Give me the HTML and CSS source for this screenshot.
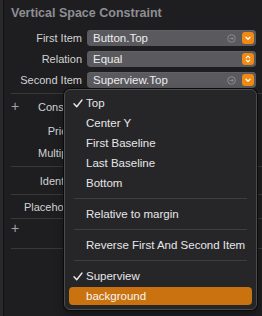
FILE: index.html
```html
<!DOCTYPE html>
<html>
<head>
<meta charset="utf-8">
<link rel="stylesheet" href="styles.css">
</head>
<body>
<div class="app">
  <div class="edge"></div>
  <div class="panel">
    <div class="title">Vertical Space Constraint</div>
    <div class="rows">
      <div class="row">
        <div class="label">First Item</div>
        <div class="field">
          <span class="value">Button.Top</span>
          <svg class="go" width="9" height="9" viewBox="0 0 9 9"><circle cx="4.5" cy="4.5" r="3.8" fill="none" stroke="#8a8a8e" stroke-width="1"/><path d="M2.6 4.5h3.6M4.6 2.9l1.6 1.6-1.6 1.6" fill="none" stroke="#8a8a8e" stroke-width="0.9"/></svg>
          <span class="obtn"><svg width="12" height="12" viewBox="0 0 12 12"><path d="M4 5.2l2 2 2-2" fill="none" stroke="#fff" stroke-width="1.3" stroke-linecap="round" stroke-linejoin="round"/></svg></span>
        </div>
      </div>
      <div class="row">
        <div class="label">Relation</div>
        <div class="field">
          <span class="value">Equal</span>
          <span class="obtn"><svg width="12" height="12" viewBox="0 0 12 12"><path d="M4.2 4.9l1.8-1.8 1.8 1.8M4.2 7.1l1.8 1.8 1.8-1.8" fill="none" stroke="#fff" stroke-width="1.2" stroke-linecap="round" stroke-linejoin="round"/></svg></span>
        </div>
      </div>
      <div class="row">
        <div class="label">Second Item</div>
        <div class="field">
          <span class="value">Superview.Top</span>
          <svg class="go" width="9" height="9" viewBox="0 0 9 9"><circle cx="4.5" cy="4.5" r="3.8" fill="none" stroke="#8a8a8e" stroke-width="1"/><path d="M2.6 4.5h3.6M4.6 2.9l1.6 1.6-1.6 1.6" fill="none" stroke="#8a8a8e" stroke-width="0.9"/></svg>
          <span class="obtn"><svg width="12" height="12" viewBox="0 0 12 12"><path d="M4 5.2l2 2 2-2" fill="none" stroke="#fff" stroke-width="1.3" stroke-linecap="round" stroke-linejoin="round"/></svg></span>
        </div>
      </div>
    </div>
    <div class="sep s1"></div>
    <div class="row r-const"><span class="plus">+</span><div class="label">Constant</div></div>
    <div class="row r-prio"><div class="label">Priority</div></div>
    <div class="row r-mult"><div class="label">Multiplier</div></div>
    <div class="sep s2"></div>
    <div class="row r-ident"><div class="label">Identifier</div></div>
    <div class="sep s3"></div>
    <div class="row r-place"><div class="label">Placeholder</div></div>
    <div class="sep s4"></div>
    <div class="row r-plus"><span class="plus">+</span></div>
    <div class="sep s5"></div>
  </div>

  <div class="menu">
    <div class="item"><svg class="check" width="10" height="9" viewBox="0 0 10 9"><path d="M1 4.8l2.7 3L9 1" fill="none" stroke="#e6e6e6" stroke-width="1.4" stroke-linecap="round" stroke-linejoin="round"/></svg>Top</div>
    <div class="item">Center Y</div>
    <div class="item">First Baseline</div>
    <div class="item">Last Baseline</div>
    <div class="item">Bottom</div>
    <div class="msep"></div>
    <div class="item">Relative to margin</div>
    <div class="msep"></div>
    <div class="item">Reverse First And Second Item</div>
    <div class="msep"></div>
    <div class="item"><svg class="check" width="10" height="9" viewBox="0 0 10 9"><path d="M1 4.8l2.7 3L9 1" fill="none" stroke="#e6e6e6" stroke-width="1.4" stroke-linecap="round" stroke-linejoin="round"/></svg>Superview</div>
    <div class="item hl">background</div>
  </div>
</div>
</body>
</html>
```

FILE: styles.css
```css
* { box-sizing: border-box; }
html, body {
  margin: 0;
  padding: 0;
  width: 262px;
  height: 316px;
  overflow: hidden;
  background: #1e1e20;
  font-family: "Liberation Sans", Arial, sans-serif;
}
.app {
  position: relative;
  display: flex;
  width: 262px;
  height: 316px;
}
.edge {
  width: 4px;
  flex: none;
  background: #2a2a2c;
  border-right: 1px solid #131314;
}
.panel {
  flex: 1;
  display: flex;
  flex-direction: column;
  padding-right: 6px;
}
.title {
  margin-top: 5px;
  padding-left: 7px;
  height: 16px;
  line-height: 16px;
  font-size: 12.5px;
  font-weight: bold;
  color: #8e8e93;
}
.rows {
  margin-top: 9px;
  display: flex;
  flex-direction: column;
  gap: 5px;
}
.row {
  display: flex;
  align-items: center;
  height: 16px;
  position: relative;
}
.label {
  width: 78px;
  flex: none;
  text-align: right;
  font-size: 11px;
  color: #d2d2d4;
  padding-right: 0;
}
.field {
  margin-left: 5px;
  flex: 1;
  height: 16px;
  border-radius: 4px;
  background: #5a5a5e;
  display: flex;
  align-items: center;
  padding: 0 2px 0 6px;
  box-shadow: inset 0 0.5px 0 #6a6a6e;
}
.value {
  flex: 1;
  font-size: 11.5px;
  color: #ececee;
}
.go {
  margin-right: 6px;
}
.obtn {
  width: 12px;
  height: 12px;
  border-radius: 3px;
  background: #f18a12;
  display: flex;
  align-items: center;
  justify-content: center;
}
.sep {
  height: 1px;
  background: #38383b;
  margin-left: 7px;
  margin-right: -6px;
}
.s1 { margin-top: 5px; }
.r-const { margin-top: 5px; }
.r-prio { margin-top: 8px; }
.r-mult { margin-top: 6px; }
.s2 { margin-top: 5px; }
.r-ident { margin-top: 6px; }
.s3 { margin-top: 5px; }
.r-place { margin-top: 4px; }
.s4 { margin-top: 3px; }
.r-plus { margin-top: 2px; }
.s5 { margin-top: 11px; }
.plus {
  position: absolute;
  left: 7px;
  top: 0;
  line-height: 15px;
  font-size: 14px;
  color: #a5a5a8;
}
.menu {
  position: absolute;
  left: 64px;
  top: 89px;
  width: 193px;
  height: 221px;
  border: 1px solid #4b4b4e;
  border-radius: 6px;
  background: #262628;
  box-shadow: 0 0 0 1px #0b0b0c, 0 4px 10px rgba(0,0,0,0.4);
  padding: 3px 4px;
  display: flex;
  flex-direction: column;
}
.item {
  position: relative;
  height: 20px;
  line-height: 20px;
  padding-left: 17px;
  font-size: 11.5px;
  color: #e6e6e8;
  white-space: nowrap;
}
.check {
  position: absolute;
  left: 4px;
  top: 6px;
}
.msep {
  height: 11px;
  display: flex;
  align-items: center;
  padding: 0 5px;
}
.msep::before {
  content: "";
  flex: 1;
  height: 1px;
  background: #3e3e41;
}
.item.hl {
  height: 18px;
  line-height: 18px;
  margin: 1px 0;
  border-radius: 4px;
  background: #c9720f;
  color: #f6f6f6;
}
```
